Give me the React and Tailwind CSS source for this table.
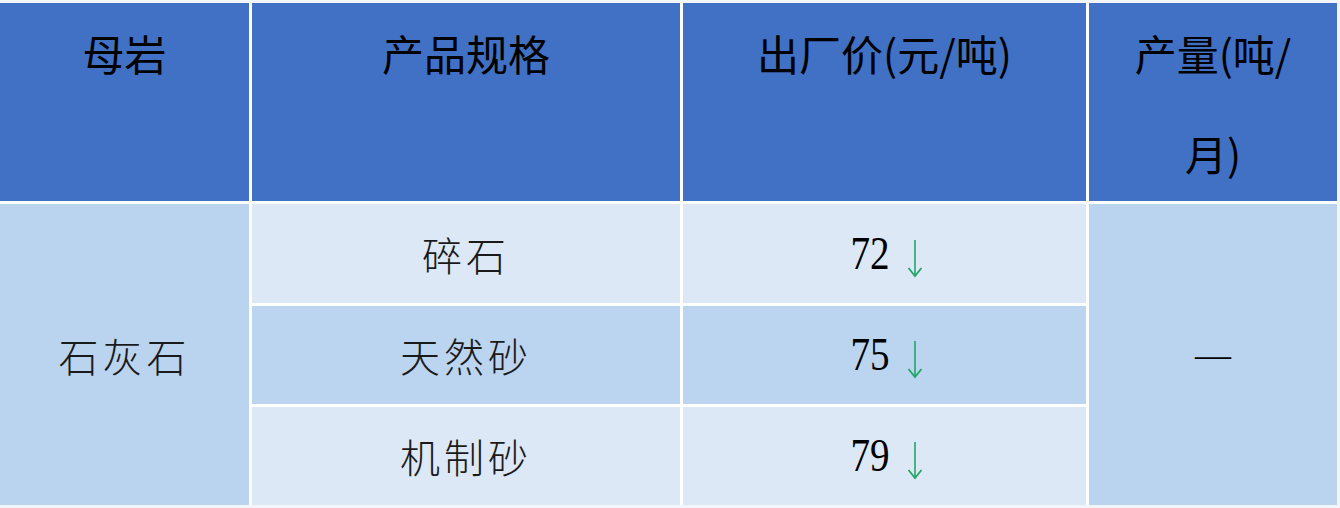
import React from 'react';

const head = "font-['Noto_Sans_CJK_SC',sans-serif] text-[42px] font-normal leading-[100px] text-black text-center bg-[#4071c5]";
const kai = "font-['Noto_Sans_CJK_SC',sans-serif] text-[40px] font-light tracking-[4px] text-[#1a1a1a]";

function DownArrow() {
  return (
    <svg width="16" height="38" viewBox="0 0 16 38" className="mt-[10px] ml-[14px]">
      <line x1="8" y1="0" x2="8" y2="36" stroke="#23a566" strokeWidth="1.6" />
      <polyline points="1.5,28 8,36 14.5,28" fill="none" stroke="#23a566" strokeWidth="1.8" />
    </svg>
  );
}

function Price({ value }) {
  return (
    <div className="flex items-center justify-center">
      <span className="inline-block font-['Liberation_Serif',serif] text-[46px] leading-none text-black scale-x-[0.85]">
        {value}
      </span>
      <DownArrow />
    </div>
  );
}

const rows = [
  { name: '碎石', price: 72, bg: 'bg-[#dce8f5]' },
  { name: '天然砂', price: 75, bg: 'bg-[#bbd4ef]' },
  { name: '机制砂', price: 79, bg: 'bg-[#dce8f5]' },
];

export default function App() {
  return (
    <div className="w-[1340px] h-[508px] bg-[#f2f5f9] pt-[3px] pr-[3px] pb-[3px]">
      <div className="grid grid-cols-[249px_428px_403px_1fr] grid-rows-[198px_99px_98px_98px] gap-[3px] bg-white">
        <div className={head}>母岩</div>
        <div className={head}>产品规格</div>
        <div className={head}>出厂价(元/吨)</div>
        <div className={head}>
          产量(吨/
          <br />
          月)
        </div>

        <div className={`row-span-3 col-start-1 row-start-2 flex items-center justify-center bg-[#bad4ef] ${kai}`}>
          石灰石
        </div>

        {rows.map((r, i) => (
          <React.Fragment key={r.name}>
            <div className={`flex items-center justify-center ${r.bg} ${kai}`}>{r.name}</div>
            <div className={`flex items-center justify-center ${r.bg}`}>
              <Price value={r.price} />
            </div>
            {i === 0 && (
              <div className="row-span-3 flex items-center justify-center bg-[#bad4ef]">
                <span className="font-['Liberation_Serif',serif] text-[36px] leading-none text-black">—</span>
              </div>
            )}
          </React.Fragment>
        ))}
      </div>
    </div>
  );
}
